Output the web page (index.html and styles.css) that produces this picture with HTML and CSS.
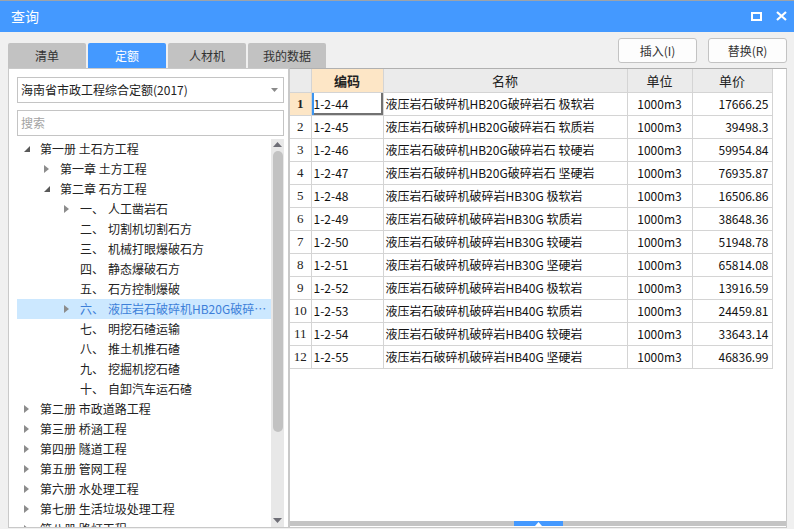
FILE: index.html
```html
<!DOCTYPE html>
<html lang="zh-CN">
<head>
<meta charset="utf-8">
<title>查询</title>
<link rel="stylesheet" href="styles.css">
</head>
<body>
<div class="titlebar">
  <span class="title">查询</span>
  <div class="win-btns">
    <svg class="ic-max" width="11" height="9" viewBox="0 0 11 9"><rect x="1" y="1" width="9" height="7" fill="none" stroke="#fff" stroke-width="2"/></svg>
    <svg class="ic-close" width="11" height="10" viewBox="0 0 11 10"><path d="M1 1 L10 9 M10 1 L1 9" stroke="#fff" stroke-width="2.2" fill="none"/></svg>
  </div>
</div>

<div class="toolbar">
  <div class="tabs">
    <div class="tab">清单</div>
    <div class="tab active">定额</div>
    <div class="tab">人材机</div>
    <div class="tab">我的数据</div>
  </div>
  <div class="actions">
    <button class="btn">插入(I)</button>
    <button class="btn">替换(R)</button>
  </div>
</div>

<div class="main">
  <div class="left">
    <div class="select">
      <span class="select-text">海南省市政工程综合定额(2017)</span>
      <svg class="select-arrow" width="7" height="4" viewBox="0 0 7 4"><path d="M0 0 L7 0 L3.5 4 Z" fill="#8a8a8a"/></svg>
    </div>
    <div class="search">搜索</div>
    <div class="tree-wrap">
      <ul class="tree">
        <li class="node lvl0"><span class="arrow"><svg width="6" height="6" viewBox="0 0 6 6"><path d="M6 0 L6 6 L0 6 Z" fill="#595959"/></svg></span><span class="label">第一册 土石方工程</span></li>
        <li class="node lvl1"><span class="arrow"><svg width="5" height="8" viewBox="0 0 5 8"><path d="M0 0 L5 4 L0 8 Z" fill="#8c8c8c"/></svg></span><span class="label">第一章 土方工程</span></li>
        <li class="node lvl1"><span class="arrow"><svg width="6" height="6" viewBox="0 0 6 6"><path d="M6 0 L6 6 L0 6 Z" fill="#595959"/></svg></span><span class="label">第二章 石方工程</span></li>
        <li class="node lvl2"><span class="arrow"><svg width="5" height="8" viewBox="0 0 5 8"><path d="M0 0 L5 4 L0 8 Z" fill="#8c8c8c"/></svg></span><span class="label"><span class="num">一、</span>人工凿岩石</span></li>
        <li class="node lvl2"><span class="arrow"></span><span class="label"><span class="num">二、</span>切割机切割石方</span></li>
        <li class="node lvl2"><span class="arrow"></span><span class="label"><span class="num">三、</span>机械打眼爆破石方</span></li>
        <li class="node lvl2"><span class="arrow"></span><span class="label"><span class="num">四、</span>静态爆破石方</span></li>
        <li class="node lvl2"><span class="arrow"></span><span class="label"><span class="num">五、</span>石方控制爆破</span></li>
        <li class="node lvl2 selected"><span class="arrow"><svg width="5" height="8" viewBox="0 0 5 8"><path d="M0 0 L5 4 L0 8 Z" fill="#8c8c8c"/></svg></span><span class="label"><span class="num">六、</span>液压岩石破碎机HB20G破碎岩石</span></li>
        <li class="node lvl2"><span class="arrow"></span><span class="label"><span class="num">七、</span>明挖石碴运输</span></li>
        <li class="node lvl2"><span class="arrow"></span><span class="label"><span class="num">八、</span>推土机推石碴</span></li>
        <li class="node lvl2"><span class="arrow"></span><span class="label"><span class="num">九、</span>挖掘机挖石碴</span></li>
        <li class="node lvl2"><span class="arrow"></span><span class="label"><span class="num">十、</span>自卸汽车运石碴</span></li>
        <li class="node lvl0"><span class="arrow"><svg width="5" height="8" viewBox="0 0 5 8"><path d="M0 0 L5 4 L0 8 Z" fill="#8c8c8c"/></svg></span><span class="label">第二册 市政道路工程</span></li>
        <li class="node lvl0"><span class="arrow"><svg width="5" height="8" viewBox="0 0 5 8"><path d="M0 0 L5 4 L0 8 Z" fill="#8c8c8c"/></svg></span><span class="label">第三册 桥涵工程</span></li>
        <li class="node lvl0"><span class="arrow"><svg width="5" height="8" viewBox="0 0 5 8"><path d="M0 0 L5 4 L0 8 Z" fill="#8c8c8c"/></svg></span><span class="label">第四册 隧道工程</span></li>
        <li class="node lvl0"><span class="arrow"><svg width="5" height="8" viewBox="0 0 5 8"><path d="M0 0 L5 4 L0 8 Z" fill="#8c8c8c"/></svg></span><span class="label">第五册 管网工程</span></li>
        <li class="node lvl0"><span class="arrow"><svg width="5" height="8" viewBox="0 0 5 8"><path d="M0 0 L5 4 L0 8 Z" fill="#8c8c8c"/></svg></span><span class="label">第六册 水处理工程</span></li>
        <li class="node lvl0"><span class="arrow"><svg width="5" height="8" viewBox="0 0 5 8"><path d="M0 0 L5 4 L0 8 Z" fill="#8c8c8c"/></svg></span><span class="label">第七册 生活垃圾处理工程</span></li>
        <li class="node lvl0"><span class="arrow"><svg width="5" height="8" viewBox="0 0 5 8"><path d="M0 0 L5 4 L0 8 Z" fill="#8c8c8c"/></svg></span><span class="label">第八册 路灯工程</span></li>
      </ul>
      <div class="vscroll">
        <svg class="sc-up" width="9" height="5" viewBox="0 0 9 5"><path d="M0 5 L9 5 L4.5 0 Z" fill="#6e6e76"/></svg>
        <div class="thumb"></div>
        <svg class="sc-down" width="9" height="5" viewBox="0 0 9 5"><path d="M0 0 L9 0 L4.5 5 Z" fill="#6e6e76"/></svg>
      </div>
    </div>
  </div>

  <div class="right">
    <div class="grid">
      <table>
        <colgroup>
          <col class="c-no"><col class="c-code"><col class="c-name"><col class="c-unit"><col class="c-price">
        </colgroup>
        <thead>
          <tr><th></th><th class="hl">编码</th><th>名称</th><th>单位</th><th>单价</th></tr>
        </thead>
        <tbody>
          <tr><td class="no hl">1</td><td class="code sel">1-2-44</td><td>液压岩石破碎机HB20G破碎岩石 极软岩</td><td class="unit">1000m3</td><td class="price">17666.25</td></tr>
          <tr><td class="no">2</td><td class="code">1-2-45</td><td>液压岩石破碎机HB20G破碎岩石 软质岩</td><td class="unit">1000m3</td><td class="price">39498.3</td></tr>
          <tr><td class="no">3</td><td class="code">1-2-46</td><td>液压岩石破碎机HB20G破碎岩石 较硬岩</td><td class="unit">1000m3</td><td class="price">59954.84</td></tr>
          <tr><td class="no">4</td><td class="code">1-2-47</td><td>液压岩石破碎机HB20G破碎岩石 坚硬岩</td><td class="unit">1000m3</td><td class="price">76935.87</td></tr>
          <tr><td class="no">5</td><td class="code">1-2-48</td><td>液压岩石破碎机破碎岩HB30G 极软岩</td><td class="unit">1000m3</td><td class="price">16506.86</td></tr>
          <tr><td class="no">6</td><td class="code">1-2-49</td><td>液压岩石破碎机破碎岩HB30G 软质岩</td><td class="unit">1000m3</td><td class="price">38648.36</td></tr>
          <tr><td class="no">7</td><td class="code">1-2-50</td><td>液压岩石破碎机破碎岩HB30G 较硬岩</td><td class="unit">1000m3</td><td class="price">51948.78</td></tr>
          <tr><td class="no">8</td><td class="code">1-2-51</td><td>液压岩石破碎机破碎岩HB30G 坚硬岩</td><td class="unit">1000m3</td><td class="price">65814.08</td></tr>
          <tr><td class="no">9</td><td class="code">1-2-52</td><td>液压岩石破碎机破碎岩HB40G 极软岩</td><td class="unit">1000m3</td><td class="price">13916.59</td></tr>
          <tr><td class="no">10</td><td class="code">1-2-53</td><td>液压岩石破碎机破碎岩HB40G 软质岩</td><td class="unit">1000m3</td><td class="price">24459.81</td></tr>
          <tr><td class="no">11</td><td class="code">1-2-54</td><td>液压岩石破碎机破碎岩HB40G 较硬岩</td><td class="unit">1000m3</td><td class="price">33643.14</td></tr>
          <tr><td class="no">12</td><td class="code">1-2-55</td><td>液压岩石破碎机破碎岩HB40G 坚硬岩</td><td class="unit">1000m3</td><td class="price">46836.99</td></tr>
        </tbody>
      </table>
    </div>
    <div class="hbar"><span class="handle"><svg width="7" height="4" viewBox="0 0 7 4"><path d="M0 4 L7 4 L3.5 0 Z" fill="#fff"/></svg></span></div>
  </div>
</div>
</body>
</html>
```

FILE: styles.css
```css
* { box-sizing: border-box; }

html, body {
  margin: 0;
  padding: 0;
}

body {
  width: 794px;
  height: 529px;
  overflow: hidden;
  background: #f0f0f0;
  font-family: "Noto Sans CJK SC", "Noto Sans", sans-serif;
  font-size: 12px;
  color: #222;
  display: flex;
  flex-direction: column;
}

/* title bar */
.titlebar {
  height: 32px;
  flex: none;
  border-top: 1px solid #9da3aa;
  background: #4499ff;
  color: #fff;
  display: flex;
  align-items: center;
  padding: 0 7px 0 11px;
}

.title {
  font-size: 14px;
  line-height: 31px;
}

.win-btns {
  margin-left: auto;
  display: flex;
  align-items: center;
  gap: 14px;
  margin-top: -1px;
}

.ic-max, .ic-close { display: block; }

/* toolbar */
.toolbar {
  height: 36px;
  flex: none;
  display: flex;
  justify-content: space-between;
  padding: 0 7px 0 8px;
}

.tabs {
  display: flex;
  align-self: flex-end;
  gap: 2px;
}

.tab {
  width: 78px;
  height: 25px;
  line-height: 25px;
  text-align: center;
  background: #c2c2c2;
  color: #333;
  border-radius: 2px 2px 0 0;
}

.tab.active {
  background: #4499ff;
  color: #fff;
}

.actions {
  display: flex;
  gap: 11px;
  padding-top: 6px;
}

.btn {
  width: 79px;
  height: 25px;
  border: 1px solid #c3c3c3;
  border-radius: 3px;
  background: #fdfdfd;
  font-family: inherit;
  font-size: 12px;
  color: #333;
  padding: 0;
}

/* main */
.main {
  height: 460px;
  flex: none;
  display: flex;
  padding: 0 7px 0 8px;
}

.left {
  width: 281px;
  flex: none;
  background: #fff;
  border: 1px solid #c9c9c9;
  padding: 8px 4px 0 8px;
  display: flex;
  flex-direction: column;
}

.select {
  height: 26px;
  flex: none;
  border: 1px solid #c4c4c4;
  display: flex;
  align-items: center;
  padding: 0 5px 0 3px;
}

.select-text {
  flex: 1;
  line-height: 24px;
  color: #222;
}

.search {
  height: 26px;
  flex: none;
  margin-top: 7px;
  border: 1px solid #c4c4c4;
  padding-left: 3px;
  line-height: 24px;
  color: #a3a3a3;
}

.tree-wrap {
  flex: 1;
  min-height: 0;
  margin-top: 3px;
  display: flex;
  overflow: hidden;
}

.tree {
  flex: 1;
  min-width: 0;
  list-style: none;
  margin: 0;
  padding: 0;
}

.node {
  height: 20px;
  display: flex;
  align-items: center;
  white-space: nowrap;
}

.node.lvl1 { padding-left: 20px; }
.node.lvl2 { padding-left: 40px; }

.arrow {
  width: 23px;
  flex: none;
  display: flex;
  align-items: center;
  padding-left: 7px;
  height: 20px;
}

.arrow svg { display: block; }

.label {
  flex: 1;
  min-width: 0;
  overflow: hidden;
  text-overflow: ellipsis;
  line-height: 20px;
  padding-right: 3px;
}

.num {
  display: inline-block;
  width: 28px;
}

.node.selected {
  background: #cce8ff;
}

.node.selected .label {
  color: #3d7fd9;
}

.vscroll {
  width: 13px;
  flex: none;
  background: #e8e8e8;
  display: flex;
  flex-direction: column;
  align-items: center;
}

.sc-up {
  display: block;
  margin-top: 3px;
}

.thumb {
  width: 10px;
  height: 281px;
  margin-top: 4px;
  background: #c2c2c2;
  border-radius: 5px;
}

.sc-down {
  display: block;
  margin-top: auto;
  margin-bottom: 4px;
}

/* right grid */
.right {
  flex: 1;
  min-width: 0;
  background: #fff;
  border: 1px solid #c9c9c9;
  border-top-color: #b0b0b0;
  display: flex;
  flex-direction: column;
}

.grid {
  flex: 1;
  min-height: 0;
  overflow: hidden;
}

table {
  border-collapse: collapse;
  table-layout: fixed;
  width: 482px;
  font-size: 12px;
  color: #111;
}

.c-no { width: 21px; }
.c-code { width: 72px; }
.c-name { width: 244px; }
.c-unit { width: 65px; }
.c-price { width: 80px; }

tr { height: 23px; }

th, td {
  border: 1px solid #d4d4d4;
  padding: 0;
  height: 23px;
  line-height: 21px;
  white-space: nowrap;
  overflow: hidden;
}

thead tr th:first-child,
tbody tr td:first-child { border-left: none; }
thead th { border-top: none; }

th {
  background: #ebebeb;
  font-weight: normal;
  font-size: 13px;
  color: #222;
  text-align: center;
}

th.hl {
  background: #fde6c6;
  font-weight: bold;
}

td { padding: 0 2px; }

td.no {
  background: #fff;
  text-align: center;
  padding: 0;
  font-family: "Liberation Serif", "Noto Sans CJK SC", serif;
  font-size: 13px;
  color: #222;
}

td.no.hl {
  background: #fde6c6;
  font-weight: bold;
}

td.sel {
  box-shadow: inset 2px 0 0 #3c95f0, inset -2px -2px 0 #727272;
}

td.unit { text-align: center; }

td.price {
  text-align: right;
  padding-right: 3px;
}

.hbar {
  height: 5px;
  flex: none;
  margin-bottom: 1px;
  background: #c4c4c4;
  display: flex;
  justify-content: center;
}

.handle {
  width: 49px;
  height: 5px;
  background: #4499ff;
  display: flex;
  align-items: center;
  justify-content: center;
}

.handle svg { display: block; }
```
